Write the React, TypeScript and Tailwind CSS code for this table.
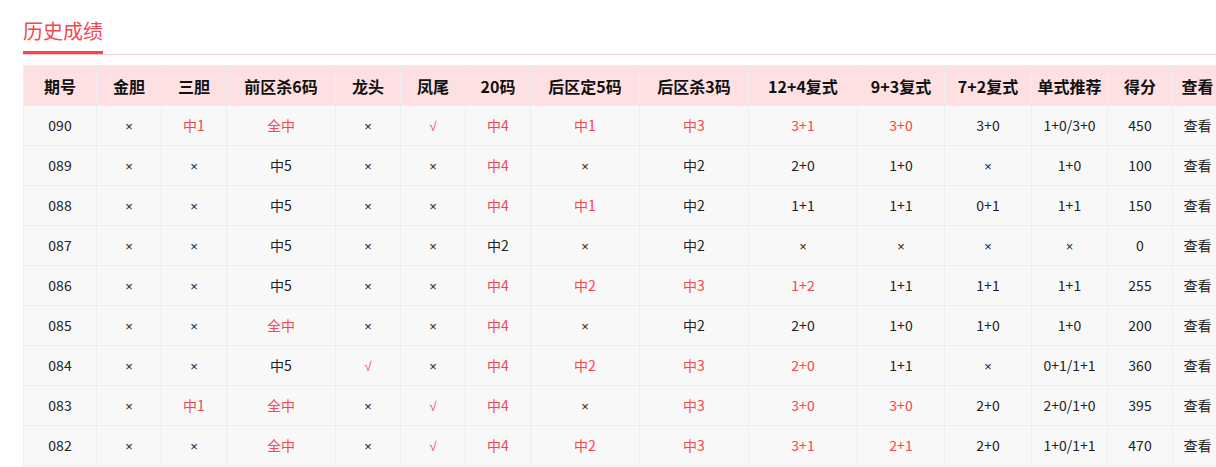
import React from "react";

const R = "r:";
const headers = ["期号","金胆","三胆","前区杀6码","龙头","凤尾","20码","后区定5码","后区杀3码","12+4复式","9+3复式","7+2复式","单式推荐","得分","查看"];
const widths = ["w-[73px]","w-[65px]","w-[65px]","w-[109px]","w-[65px]","w-[65px]","w-[65px]","w-[109px]","w-[109px]","w-[109px]","w-[87px]","w-[87px]","w-[76px]","w-[65px]","w-[50px]"];

const rows: string[][] = [
  ["090","×","r:中1","r:全中","×","r:√","r:中4","r:中1","r:中3","r:3+1","r:3+0","3+0","1+0/3+0","450","查看"],
  ["089","×","×","中5","×","×","r:中4","×","中2","2+0","1+0","×","1+0","100","查看"],
  ["088","×","×","中5","×","×","r:中4","r:中1","中2","1+1","1+1","0+1","1+1","150","查看"],
  ["087","×","×","中5","×","×","中2","×","中2","×","×","×","×","0","查看"],
  ["086","×","×","中5","×","×","r:中4","r:中2","r:中3","r:1+2","1+1","1+1","1+1","255","查看"],
  ["085","×","×","r:全中","×","×","r:中4","×","中2","2+0","1+0","1+0","1+0","200","查看"],
  ["084","×","×","中5","r:√","×","r:中4","r:中2","r:中3","r:2+0","1+1","×","0+1/1+1","360","查看"],
  ["083","×","r:中1","r:全中","×","r:√","r:中4","×","r:中3","r:3+0","r:3+0","2+0","2+0/1+0","395","查看"],
  ["082","×","×","r:全中","×","r:√","r:中4","r:中2","r:中3","r:3+1","r:2+1","2+0","1+0/1+1","470","查看"],
];

export default function App() {
  return (
    <div className="w-[1216px] h-[467px] overflow-hidden bg-white font-['Noto_Sans_CJK_SC','Noto_Sans',sans-serif]">
      <div className="pl-[23px] pt-[14px]">
        <div className="border-b border-[#fbc8cb]">
          <span className="inline-block text-[20px] leading-[34px] pb-[3px] text-[#f5464f] border-b-[3px] border-[#f5464f]">历史成绩</span>
        </div>
        <div className="mt-[10px]">
          <table className="table-fixed border-collapse w-[1199px] text-center">
            <thead>
              <tr className="bg-[#fde0e2]">
                {headers.map((h, i) => (
                  <th key={i} className={`${widths[i]} h-[40px] p-0 border border-[#ebedf3] text-[16px] font-bold text-[#111] whitespace-nowrap`}>{h}</th>
                ))}
              </tr>
            </thead>
            <tbody>
              {rows.map((r, ri) => (
                <tr key={ri} className="bg-[#f8f8f8]">
                  {r.map((c, ci) => {
                    const red = c.startsWith(R);
                    const t = red ? c.slice(2) : c;
                    const sym = t === "×" || t === "√";
                    return (
                      <td key={ci} className={`h-[40px] p-0 border border-[#ebedf3] text-[14px] whitespace-nowrap ${red ? "text-[#f5464f]" : "text-[#222]"}`}>
                        {sym ? <span className="font-['Liberation_Sans',sans-serif] text-[13px]">{t}</span> : t}
                      </td>
                    );
                  })}
                </tr>
              ))}
            </tbody>
          </table>
        </div>
      </div>
    </div>
  );
}
